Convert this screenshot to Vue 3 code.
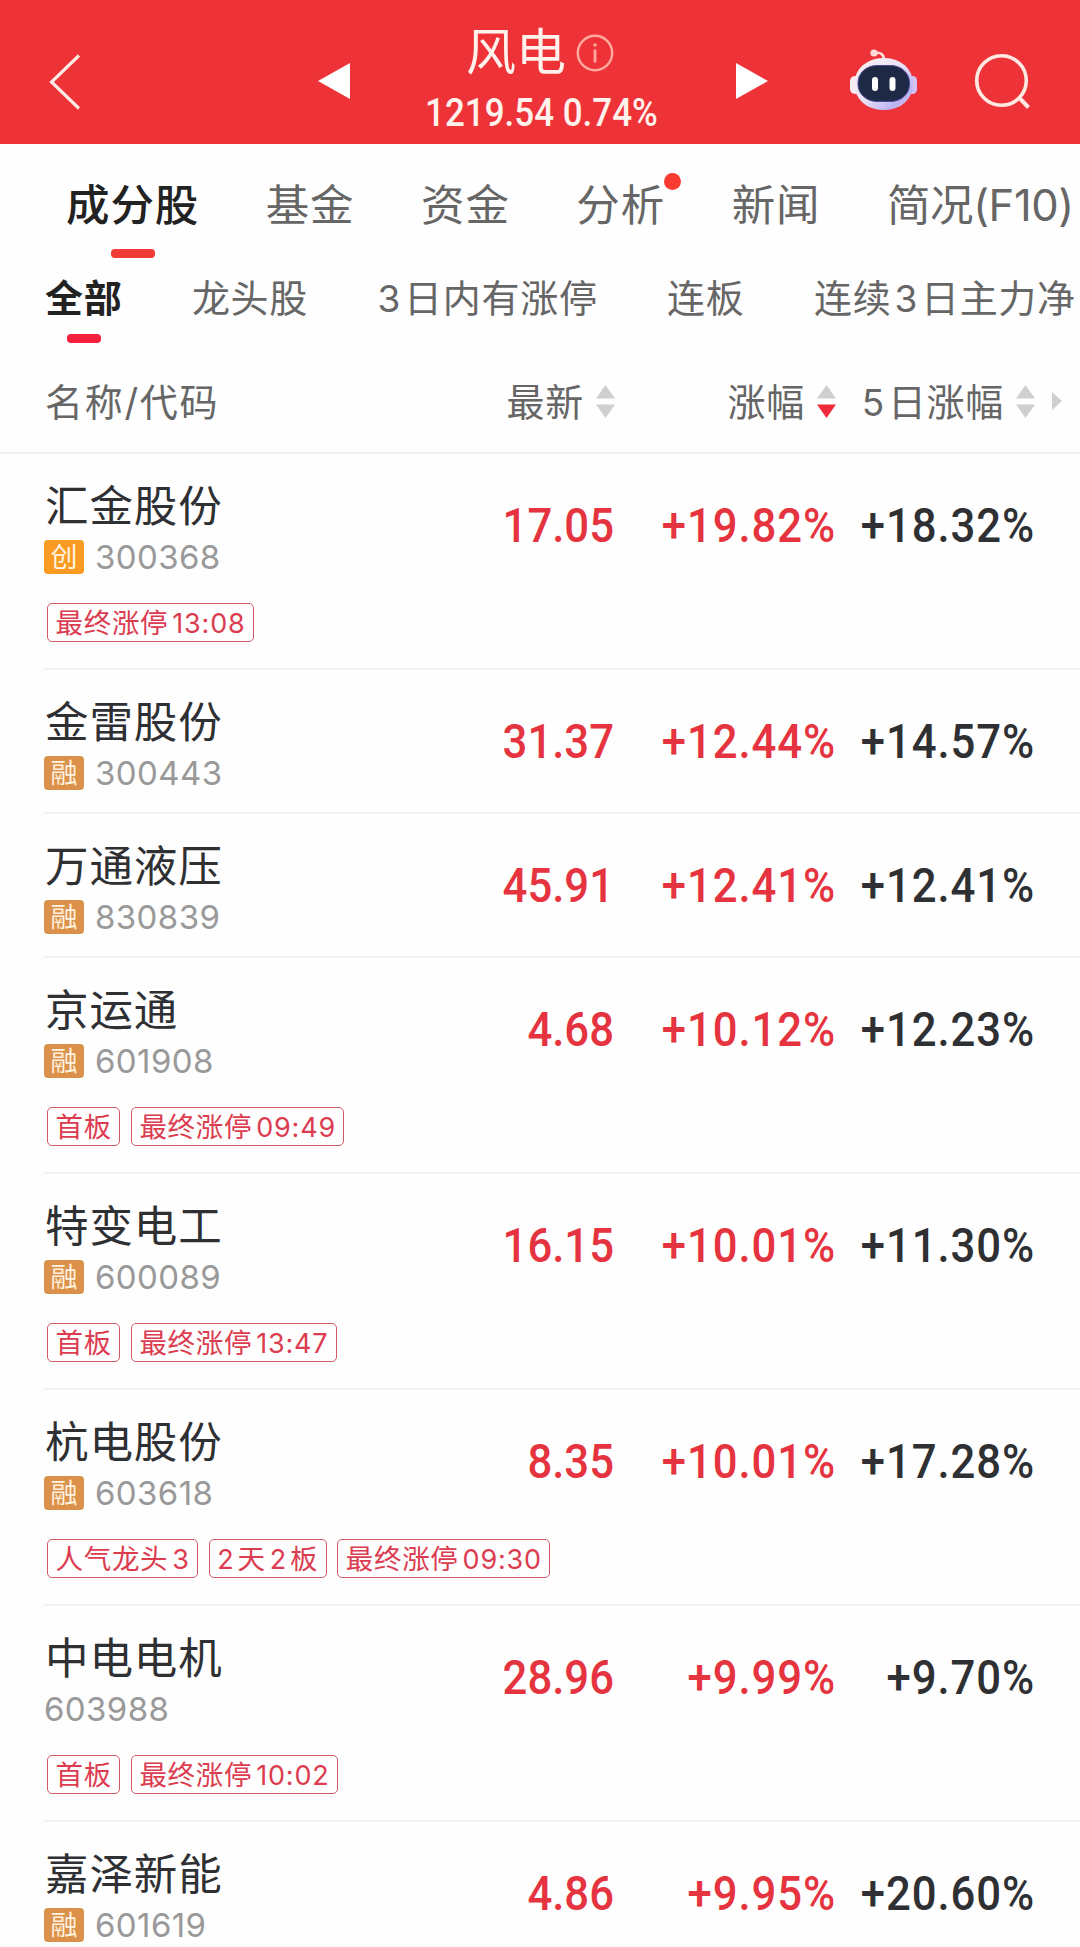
<script setup>
import { ref } from 'vue';

const tabs = [
    { label: '成分股' },
    { label: '基金' },
    { label: '资金' },
    { label: '分析', dot: true },
    { label: '新闻' },
    { label: '简况(F10)' }
];
const filters = ['全部', '龙头股', '3日内有涨停', '连板', '连续3日主力净'];

const activeTab = ref(0);
const activeFilter = ref(0);
const sortKey = ref('change');

const columns = [
    { key: 'price', label: '最新' },
    { key: 'change', label: '涨幅' },
    { key: 'change5', label: '5日涨幅' }
];

const stocks = [
    { name: '汇金股份', mark: '创', code: '300368', price: '17.05', change: '+19.82%', change5: '+18.32%', tags: ['最终涨停13:08'] },
    { name: '金雷股份', mark: '融', code: '300443', price: '31.37', change: '+12.44%', change5: '+14.57%', tags: [] },
    { name: '万通液压', mark: '融', code: '830839', price: '45.91', change: '+12.41%', change5: '+12.41%', tags: [] },
    { name: '京运通', mark: '融', code: '601908', price: '4.68', change: '+10.12%', change5: '+12.23%', tags: ['首板', '最终涨停09:49'] },
    { name: '特变电工', mark: '融', code: '600089', price: '16.15', change: '+10.01%', change5: '+11.30%', tags: ['首板', '最终涨停13:47'] },
    { name: '杭电股份', mark: '融', code: '603618', price: '8.35', change: '+10.01%', change5: '+17.28%', tags: ['人气龙头3', '2天2板', '最终涨停09:30'] },
    { name: '中电电机', mark: '', code: '603988', price: '28.96', change: '+9.99%', change5: '+9.70%', tags: ['首板', '最终涨停10:02'] },
    { name: '嘉泽新能', mark: '融', code: '601619', price: '4.86', change: '+9.95%', change5: '+20.60%', tags: [] }
];

// split digits from chinese so they can get a bit of air around them
function parts(text){
    return text.split(/([\d:]+)/).filter(p => p).map(p => ({ text: p, num: /\d/.test(p) }));
}
</script>

<template>
  <div class="page">

    <header class="topbar">
      <svg class="back" width="34" height="58" viewBox="0 0 34 58">
        <path d="M31 2.5 L3.5 29 L31 55.5" fill="none" stroke="#ffe9e2" stroke-width="3.2"/>
      </svg>
      <svg class="prev" width="32" height="36" viewBox="0 0 32 36">
        <path d="M0 18 L32 0 V36 Z" fill="#fff"/>
      </svg>
      <div class="heading">
        <div class="title">
          <span>风电</span>
          <svg width="38" height="38" viewBox="0 0 38 38">
            <circle cx="19" cy="19" r="17.2" fill="none" stroke="#ffa99d" stroke-width="2.4"/>
            <circle cx="19" cy="11" r="1.8" fill="#ffa99d"/>
            <path d="M19 15.5 V28.5" stroke="#ffa99d" stroke-width="2.8"/>
          </svg>
        </div>
        <div class="quote">1219.54 0.74%</div>
      </div>
      <svg class="next" width="32" height="36" viewBox="0 0 32 36">
        <path d="M0 0 L32 18 L0 36 Z" fill="#fff"/>
      </svg>
      <svg class="robot" width="68" height="62" viewBox="0 0 68 62">
        <defs>
          <linearGradient id="shell" x1="0" y1="0" x2="1" y2="1">
            <stop offset="0" stop-color="#fff4f4"/>
            <stop offset="0.5" stop-color="#e9e0f6"/>
            <stop offset="0.8" stop-color="#b9b2f2"/>
            <stop offset="1" stop-color="#f6d3e6"/>
          </linearGradient>
        </defs>
        <path d="M25 4 C31 3 34 6 34 11" fill="none" stroke="#ffdcd8" stroke-width="2.6"/>
        <circle cx="24" cy="4" r="3.6" fill="#ffdcd8"/>
        <rect x="0" y="27" width="10" height="18" rx="5" fill="#f7ecf4"/>
        <rect x="58" y="27" width="9" height="18" rx="4.5" fill="#d3c2f3"/>
        <rect x="4.5" y="9" width="58.5" height="52" rx="28" ry="25" fill="url(#shell)"/>
        <rect x="8" y="16.5" width="51.5" height="36" rx="19" ry="17" fill="#1e2945" stroke="#4a4a94" stroke-width="1"/>
        <rect x="22" y="28" width="6" height="14" rx="3" fill="#fff"/>
        <rect x="39.5" y="28" width="6" height="14" rx="3" fill="#fff"/>
      </svg>
      <svg class="search" width="58" height="58" viewBox="0 0 58 58">
        <circle cx="27.5" cy="27.5" r="24.8" fill="none" stroke="#ffe9e2" stroke-width="3.6"/>
        <path d="M45 44.5 L54.5 54.5" stroke="#ffe9e2" stroke-width="4"/>
      </svg>
    </header>

    <nav class="tabs">
      <span class="tab" v-for="(tab, i) in tabs" :key="tab.label"
      :class="{ active: i === activeTab }"
      @click="activeTab = i"
      >{{ tab.label }}<i v-if="tab.dot" class="dot"></i></span>
    </nav>

    <nav class="filters">
      <span class="filter" v-for="(filter, i) in filters" :key="filter"
      :class="{ active: i === activeFilter }"
      @click="activeFilter = i"
      ><span v-for="(p, n) in parts(filter)" :key="n" :class="{ num: p.num }">{{ p.text }}</span></span>
    </nav>

    <div class="grid table-head">
      <span class="label">名称/代码</span>
      <div class="col" v-for="col in columns" :key="col.key" :class="col.key" @click="sortKey = col.key">
        <span class="label"><span v-for="(p, n) in parts(col.label)" :key="n" :class="{ num: p.num }">{{ p.text }}</span></span>
        <svg class="sort" width="19" height="33" viewBox="0 0 19 33">
          <path d="M9.5 0 L19 13.5 H0 Z" fill="#cfcfcf"/>
          <path d="M0 19.5 H19 L9.5 33 Z" :fill="col.key === sortKey ? '#ee2b3a' : '#cfcfcf'"/>
        </svg>
      </div>
      <svg class="more" width="10" height="18" viewBox="0 0 10 18">
        <path d="M0 0 L10 9 L0 18 Z" fill="#cfcfcf"/>
      </svg>
    </div>

    <div class="stock" v-for="stock in stocks" :key="stock.code">
      <div class="grid">
        <div class="info">
          <div class="name">{{ stock.name }}</div>
          <div class="sub">
            <span v-if="stock.mark" class="mark" :class="{ chuang: stock.mark === '创' }">{{ stock.mark }}</span>
            <span class="code">{{ stock.code }}</span>
          </div>
        </div>
        <span class="value up">{{ stock.price }}</span>
        <span class="value pct up">{{ stock.change }}</span>
        <span class="value pct">{{ stock.change5 }}</span>
      </div>
      <div class="tags" v-if="stock.tags.length">
        <span class="tag" v-for="tag in stock.tags" :key="tag"><span v-for="(p, n) in parts(tag)" :key="n" :class="{ num: p.num }">{{ p.text }}</span></span>
      </div>
    </div>

  </div>
</template>

<style>
body{
    margin: 0;
    background: #fefefe;
}
</style>

<style scoped>
.page{
    width: 1080px;
    height: 1947px;
    overflow: hidden;
    background: #fefefe;
    color: #2f3033;
    font-family: Inter, "Noto Sans CJK SC", sans-serif;
    white-space: nowrap;
}

.topbar{
    display: grid;
    grid-template-columns: 270px 32px 386px 114px 133px 58px;
    height: 144px;
    padding: 0 0 0 48px;
    box-sizing: border-box;
    background: #ee3338;
    color: #fff1ec;
    align-items: start;
}
.topbar .back{
    margin-top: 53px;
}
.topbar .prev,
.topbar .next{
    margin-top: 63px;
}
.topbar .robot{
    margin-top: 49px;
}
.topbar .search{
    margin-top: 53px;
    margin-left: -9px;
}
.heading{
    display: flex;
    flex-direction: column;
    align-items: center;
    padding-top: 23px;
}
.heading .title{
    display: flex;
    align-items: center;
    gap: 10px;
    height: 60px;
    margin-left: -6px;
    font-size: 50px;
    line-height: 60px;
}
.heading .title span{
    margin-top: 0;
    height: 62px;
}
.heading .quote{
    height: 58px;
    line-height: 60px;
    margin-left: -4px;
    font-family: Roboto, sans-serif;
    font-weight: 500;
    font-size: 38px;
    transform: scaleX(.92);
}

.tabs{
    display: flex;
    gap: 66.5px;
    height: 122px;
    padding-left: 66px;
    font-size: 43.5px;
    letter-spacing: .9px;
    line-height: 123px;
    color: #666;
}
.tab{
    position: relative;
}
.tab:last-child{
    letter-spacing: -.4px;
}
.tab.active{
    color: #222;
    font-weight: 500;
}
.tab.active::after,
.filter.active::after{
    content: "";
    position: absolute;
    left: 50%;
    transform: translateX(-50%);
    border-radius: 4px;
}
.tab.active::after{
    bottom: 8px;
    width: 44px;
    height: 9px;
    background: #f03b36;
}
.tab .dot{
    position: absolute;
    top: 29px;
    right: -16px;
    width: 17px;
    height: 17px;
    border-radius: 50%;
    background: #f83a31;
}

.filters{
    display: flex;
    gap: 69.5px;
    height: 84px;
    padding-left: 45px;
    line-height: 64px;
    font-size: 38px;
    letter-spacing: .7px;
    color: #666;
}
.filter{
    position: relative;
}
.filter.active{
    color: #222;
    font-weight: 700;
}
.filter.active::after{
    top: 68px;
    width: 34px;
    height: 9px;
    background: #f51f3e;
}
.filter .num,
.table-head .num{
    margin-right: 3px;
    font-size: 37px;
}
.filter .num:not(:first-child){
    margin-left: 3px;
}

.grid{
    display: grid;
    grid-template-columns: 369px 201px 222px 199px;
}
.table-head{
    grid-template-columns: 369px 201px 221px 199px 10px;
    height: 104px;
    padding-left: 45px;
    box-sizing: border-box;
    border-bottom: 2px solid #eff0f1;
    font-size: 38px;
    letter-spacing: .7px;
    color: #666;
    align-items: center;
}
.table-head .col{
    display: flex;
    align-items: center;
    justify-content: flex-end;
    gap: 12px;
}
.table-head .label{
    margin-top: -4px;
}
.table-head > .label{
    letter-spacing: 1.7px;
}
.table-head .more{
    margin-left: 17px;
}

.stock{
    margin-left: 44px;
    border-bottom: 2px solid #f1f3f4;
    box-sizing: border-box;
    height: 144px;
}
.stock:has(.tags){
    height: 216px;
}
.stock .grid{
    height: 142px;
}
.name{
    margin-top: 20px;
    height: 64px;
    line-height: 64px;
    padding-left: 1px;
    font-size: 43.5px;
    letter-spacing: .9px;
}
.sub{
    display: flex;
    align-items: center;
    gap: 11px;
    height: 38px;
}
.mark{
    width: 40px;
    height: 34px;
    border-radius: 4px;
    background: #dc914b;
    color: #fff2df;
    font-size: 27px;
    line-height: 35px;
    text-align: center;
}
.mark.chuang{
    background: #f99b23;
}
.code{
    margin-top: -1px;
    font-size: 33px;
    letter-spacing: .4px;
    color: #999;
}
.value{
    margin-top: 42px;
    line-height: 60px;
    font-family: Roboto, sans-serif;
    font-weight: 500;
    font-size: 48px;
    text-align: right;
    transform: scaleX(.91);
    transform-origin: right;
}
.value.pct{
    letter-spacing: 1px;
}
.up{
    color: #e5343f;
}
.tags{
    display: flex;
    gap: 10.5px;
    margin: 7px 0 0 3px;
}
.tag{
    height: 39px;
    line-height: 38px;
    padding: 0 7.5px;
    box-sizing: border-box;
    border: 1.5px solid #d0596b;
    border-radius: 5px;
    color: #dc3c50;
    font-size: 27.5px;
    letter-spacing: .7px;
}
.tag .num{
    font-size: 27px;
    letter-spacing: .8px;
}
.tag .num:not(:first-child){
    margin-left: 4px;
}
.tag .num:not(:last-child){
    margin-right: 3px;
}
</style>
